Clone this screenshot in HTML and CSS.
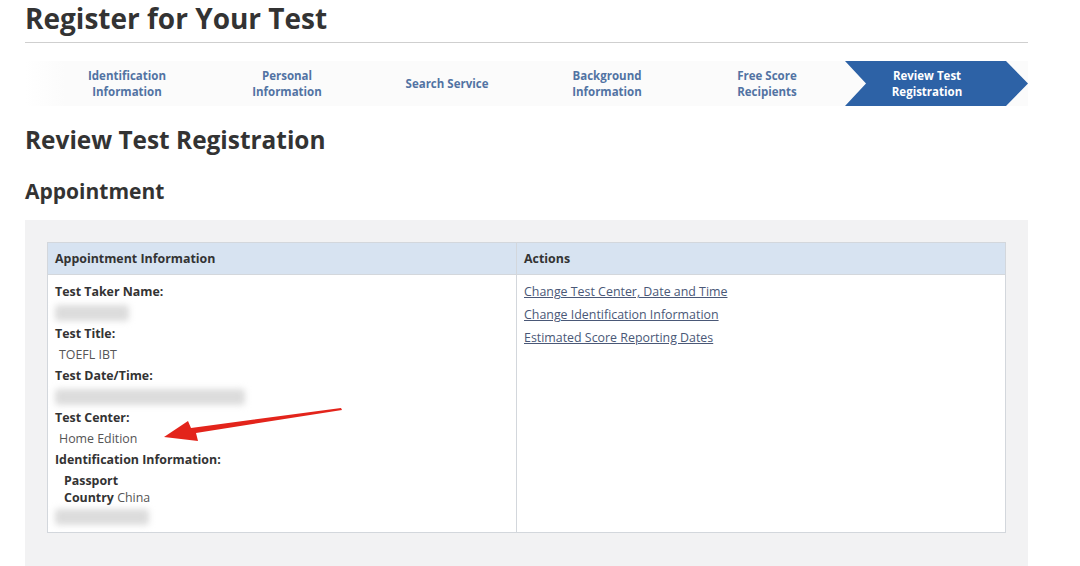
FILE: index.html
```html
<!DOCTYPE html>
<html lang="en">
<head>
    <meta charset="UTF-8">
    <title>Register for Your Test</title>
    <link rel="stylesheet" href="styles.css">
</head>
<body>
    <div class="page">
        <h1 class="page-title">Register for Your Test</h1>

        <ol class="steps">
            <li class="step">Identification<br>Information</li>
            <li class="step">Personal<br>Information</li>
            <li class="step">Search Service</li>
            <li class="step">Background<br>Information</li>
            <li class="step">Free Score<br>Recipients</li>
            <li class="step active"><span>Review Test<br>Registration</span></li>
        </ol>

        <h2 class="section-title">Review Test Registration</h2>
        <h3 class="sub-title">Appointment</h3>

        <div class="panel">
            <table class="info-table">
                <thead>
                    <tr>
                        <th class="col-info">Appointment Information</th>
                        <th>Actions</th>
                    </tr>
                </thead>
                <tbody>
                    <tr>
                        <td class="col-info">
                            <div class="label">Test Taker Name:</div>
                            <div class="line"><span class="blur" style="width:74px"></span></div>
                            <div class="label">Test Title:</div>
                            <div class="value">TOEFL IBT</div>
                            <div class="label">Test Date/Time:</div>
                            <div class="line"><span class="blur" style="width:190px"></span></div>
                            <div class="label">Test Center:</div>
                            <div class="value">Home Edition</div>
                            <div class="label">Identification Information:</div>
                            <div class="id-block">
                                <div class="label">Passport</div>
                                <div><b>Country</b> China</div>
                            </div>
                            <div class="line last"><span class="blur" style="width:94px"></span></div>
                        </td>
                        <td class="col-actions">
                            <a href="#">Change Test Center, Date and Time</a>
                            <a href="#">Change Identification Information</a>
                            <a href="#">Estimated Score Reporting Dates</a>
                        </td>
                    </tr>
                </tbody>
            </table>

            <svg class="pointer" width="200" height="40" viewBox="0 0 200 40">
                <polygon points="181,2 182,4 36,27 38,35 4,31 28,15 31,22" fill="#e3241b"/>
            </svg>
        </div>
    </div>
</body>
</html>
```

FILE: styles.css
```css
* {
    margin: 0;
    padding: 0;
    box-sizing: border-box;
}

body {
    font-family: "Open Sans", "Liberation Sans", sans-serif;
    color: #333;
    background-color: #fff;
    overflow: hidden;
}

.page {
    width: 1003px;
    margin-left: 25px;
}

.page-title {
    font-size: 28px;
    line-height: 36px;
    font-weight: 700;
    color: #333;
    padding-bottom: 6px;
    border-bottom: 1px solid #cfcfcf;
}

.steps {
    list-style: none;
    display: flex;
    height: 45px;
    margin-top: 18px;
    padding-left: 22px;
    background: linear-gradient(to right, #fff, #fbfbfb 4%, #fbfbfb);
}

.step {
    flex: 0 0 160px;
    display: flex;
    align-items: center;
    justify-content: center;
    text-align: center;
    font-size: 11.5px;
    line-height: 16px;
    font-weight: 700;
    color: #5273a3;
}

.step.active {
    flex: 1;
    margin-left: -2px;
    padding-right: 19px;
    color: #fff;
    background-color: #2d62a6;
    clip-path: polygon(0 0, calc(100% - 22px) 0, 100% 50%, calc(100% - 22px) 100%, 0 100%, 21px 50%);
}

.section-title {
    margin-top: 18px;
    font-size: 24.4px;
    line-height: 32px;
    font-weight: 700;
    color: #333;
}

.sub-title {
    margin-top: 21px;
    font-size: 21px;
    line-height: 28px;
    font-weight: 700;
    color: #333;
}

.panel {
    position: relative;
    margin-top: 15px;
    padding: 22px 22px 40px;
    background-color: #f2f2f3;
}

.info-table {
    width: 100%;
    border-collapse: collapse;
    background-color: #fff;
    font-size: 12.4px;
}

.info-table th,
.info-table td {
    border: 1px solid #d3d7dc;
    text-align: left;
    vertical-align: top;
}

.info-table th {
    height: 32px;
    padding: 0 7px;
    vertical-align: middle;
    background-color: #d7e3f1;
    font-weight: 700;
    color: #333;
}

.col-info {
    width: 469px;
}

.info-table td.col-info {
    padding: 6px 7px 6px;
}

.label {
    font-weight: 700;
    line-height: 21px;
}

.value {
    line-height: 21px;
    padding-left: 4px;
    color: #555;
}

.line {
    height: 21px;
    padding-top: 3px;
}

.line.last {
    height: 20px;
}

.blur {
    display: block;
    height: 16px;
    background-color: #dcdcdc;
    border-radius: 3px;
    filter: blur(3px);
}

.id-block {
    padding-left: 9px;
    line-height: 17px;
    padding-top: 2px;
}

.id-block .label {
    line-height: 17px;
}

.id-block div {
    color: #555;
}

.id-block b,
.id-block .label {
    color: #333;
}

.col-actions {
    padding: 5px 7px;
}

.col-actions a {
    display: block;
    line-height: 23px;
    color: #4a5877;
    text-decoration: underline;
}

.pointer {
    position: absolute;
    left: 135px;
    top: 186px;
}
```
